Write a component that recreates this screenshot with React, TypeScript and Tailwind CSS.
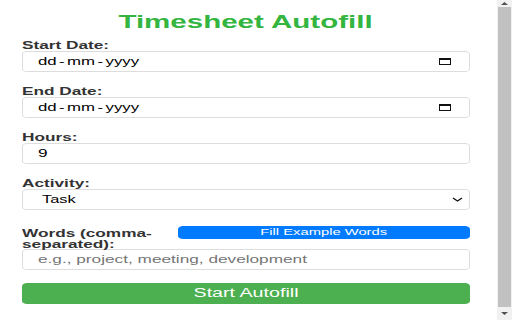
import React from "react";

function Label({ children }: { children: React.ReactNode }) {
  return (
    <div className="h-[12px] text-[10.5px] leading-[12px] font-bold text-[#333333]">
      <span className="inline-block origin-left scale-x-[1.64] whitespace-nowrap">{children}</span>
    </div>
  );
}

function CalendarIcon() {
  return (
    <svg width="14" height="7" viewBox="0 0 14 7" className="shrink-0">
      <rect x="1.5" y="0.5" width="11" height="6" fill="none" stroke="#111" strokeWidth="1" />
      <rect x="1" y="0" width="12" height="2" fill="#111" />
    </svg>
  );
}

function DateField() {
  return (
    <div className="h-[21px] border border-[#dddddd] rounded-[5px_/_3px] flex items-center justify-between pl-[15px] pr-[17px] text-[10.5px] text-black bg-white">
      <span className="inline-flex gap-[1.5px] origin-left scale-x-[1.6] whitespace-nowrap">
        <span>dd</span>
        <span>-</span>
        <span>mm</span>
        <span>-</span>
        <span>yyyy</span>
      </span>
      <CalendarIcon />
    </div>
  );
}

export default function App() {
  return (
    <div className="flex w-[512px] h-[320px] overflow-hidden bg-white font-['Liberation_Sans',Arial,sans-serif]">
      <div className="flex-1 flex flex-col pl-[22px] pr-[27px] pt-[11px]">
        <h1 className="text-center text-[18px] leading-[22px] font-bold text-[#33b540]">
          <span className="inline-block scale-x-[1.64] whitespace-nowrap">Timesheet Autofill</span>
        </h1>
        <div className="mt-[6px] flex flex-col gap-[13px]">
          <div className="flex flex-col">
            <Label>Start Date:</Label>
            <DateField />
          </div>
          <div className="flex flex-col">
            <Label>End Date:</Label>
            <DateField />
          </div>
          <div className="flex flex-col">
            <Label>Hours:</Label>
            <div className="h-[21px] border border-[#dddddd] rounded-[5px_/_3px] flex items-center pl-[15px] text-[10.5px] text-black">
              <span className="inline-block origin-left scale-x-[1.64]">9</span>
            </div>
          </div>
          <div className="flex flex-col">
            <Label>Activity:</Label>
            <div className="h-[21px] border border-[#dddddd] rounded-[5px_/_3px] flex items-center justify-between pl-[19px] pr-[6px] text-[10px] text-black">
              <span className="inline-block origin-left scale-x-[1.64]">Task</span>
              <svg width="11" height="5" viewBox="0 0 11 5">
                <path d="M1 1 L5.5 4 L10 1" fill="none" stroke="#111" strokeWidth="1.4" />
              </svg>
            </div>
          </div>
          <div className="flex flex-col">
            <div className="flex items-start gap-[8px]">
              <div className="w-[148px] mt-[5px] text-[10.5px] leading-[10.5px] font-bold text-[#333333]">
                <span className="block origin-left scale-x-[1.64] whitespace-nowrap">Words (comma-</span>
                <span className="block origin-left scale-x-[1.64] whitespace-nowrap">separated):</span>
              </div>
              <button className="flex-1 h-[13px] mt-[3px] bg-[#007bff] text-white text-[9px] leading-[13px] rounded-[5px_/_3px] text-center">
                <span className="inline-block scale-x-[1.64] whitespace-nowrap">Fill Example Words</span>
              </button>
            </div>
            <div className="h-[21px] border border-[#dddddd] rounded-[5px_/_3px] flex items-center pl-[15px] text-[10.5px] text-[#757575]">
              <span className="inline-block origin-left scale-x-[1.64] whitespace-nowrap">
                e.g., project, meeting, development
              </span>
            </div>
          </div>
          <button className="h-[21px] bg-[#4caf50] text-white text-[12px] leading-[21px] rounded-[5px_/_3px] text-center">
            <span className="inline-block scale-x-[1.64] whitespace-nowrap">Start Autofill</span>
          </button>
        </div>
      </div>
      <div className="w-[15px] h-[320px] bg-[#f1f1f1] flex flex-col">
        <div className="h-[7px] flex items-center justify-center">
          <svg width="7" height="3" viewBox="0 0 7 3">
            <path d="M0 3 L3.5 0 L7 3 Z" fill="#505050" />
          </svg>
        </div>
        <div className="flex-1 ml-[1px] w-[13px] bg-[#c1c1c1]" />
        <div className="h-[13px] flex items-center justify-center">
          <svg width="7" height="3" viewBox="0 0 7 3">
            <path d="M0 0 L7 0 L3.5 3 Z" fill="#505050" />
          </svg>
        </div>
      </div>
    </div>
  );
}
